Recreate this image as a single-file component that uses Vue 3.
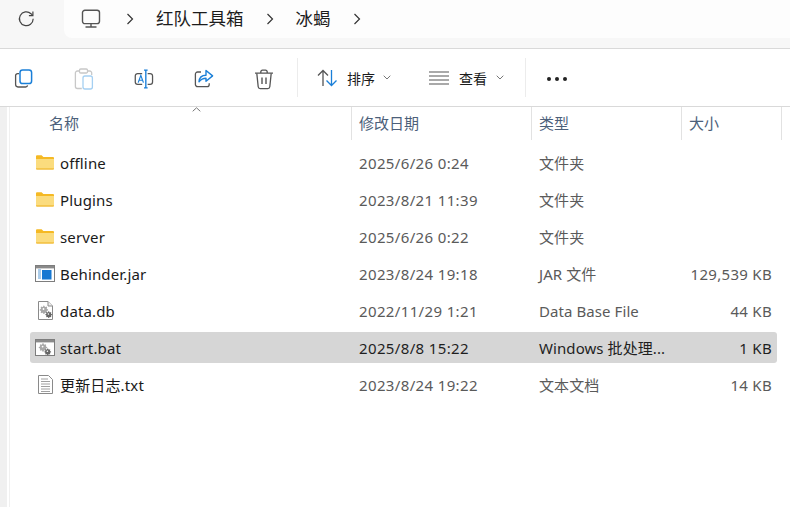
<script setup>
const cols = [
  { key: 'name', label: '名称', cls: 'c-name' },
  { key: 'date', label: '修改日期', cls: 'c-date' },
  { key: 'type', label: '类型', cls: 'c-type' },
  { key: 'size', label: '大小', cls: 'c-size' },
]
const files = [
  { name: 'offline', date: '2025/6/26 0:24', type: '文件夹', size: '', icon: 'folder' },
  { name: 'Plugins', date: '2023/8/21 11:39', type: '文件夹', size: '', icon: 'folder' },
  { name: 'server', date: '2025/6/26 0:22', type: '文件夹', size: '', icon: 'folder' },
  { name: 'Behinder.jar', date: '2023/8/24 19:18', type: 'JAR 文件', size: '129,539 KB', icon: 'jar' },
  { name: 'data.db', date: '2022/11/29 1:21', type: 'Data Base File', size: '44 KB', icon: 'db' },
  { name: 'start.bat', date: '2025/8/8 15:22', type: 'Windows 批处理...', size: '1 KB', icon: 'bat', selected: true },
  { name: '更新日志.txt', date: '2023/8/24 19:22', type: '文本文档', size: '14 KB', icon: 'txt' },
]
const gear = 'M0-3.4l.9.1.3 1 .9.4.9-.5.7.7-.5.9.4.9 1 .3v1l-1 .3-.4.9.5.9-.7.7-.9-.5-.9.4-.3 1h-1l-.3-1-.9-.4-.9.5-.7-.7.5-.9-.4-.9-1-.3v-1l1-.3.4-.9-.5-.9.7-.7.9.5.9-.4.3-1z'
</script>

<template>
  <div class="window">
    <header class="navbar">
      <svg class="refresh" width="20" height="20" viewBox="0 0 20 20" fill="none">
        <path d="M16.2 9.8a6.9 6.9 0 1 1-2.2-5.1l1.6 1.6" stroke="#444" stroke-width="1.2" />
        <path d="M15.9 2.6v4h-4" stroke="#444" stroke-width="1.2" />
      </svg>
      <nav class="crumbs">
        <svg class="pc" width="20" height="20" viewBox="0 0 20 20" fill="none">
          <rect x="1.5" y="1.2" width="17" height="13.4" rx="2.4" stroke="#555" stroke-width="1.4" />
          <path d="M10 14.6v3M4.5 18h11" stroke="#555" stroke-width="1.4" />
        </svg>
        <svg class="chev c1" width="8" height="12" viewBox="0 0 8 12" fill="none"><path d="M1.5 1l5 5-5 5" stroke="#333" stroke-width="1.2" /></svg>
        <span class="crumb">红队工具箱</span>
        <svg class="chev c2" width="8" height="12" viewBox="0 0 8 12" fill="none"><path d="M1.5 1l5 5-5 5" stroke="#333" stroke-width="1.2" /></svg>
        <span class="crumb">冰蝎</span>
        <svg class="chev c3" width="8" height="12" viewBox="0 0 8 12" fill="none"><path d="M1.5 1l5 5-5 5" stroke="#333" stroke-width="1.2" /></svg>
      </nav>
    </header>

    <div class="toolbar">
      <div class="tools">
        <svg width="20" height="20" viewBox="0 0 20 20" fill="none">
          <path d="M5 4.6H3.6A2 2 0 0 0 1.6 6.6v9a2.4 2.4 0 0 0 2.4 2.4h7.6a2 2 0 0 0 2-1.6" stroke="#555" stroke-width="1.3" />
          <rect x="6" y="1" width="11.6" height="13.6" rx="2.6" stroke="#1a7fd8" stroke-width="1.5" />
        </svg>
        <svg width="20" height="22" viewBox="0 0 20 22" fill="none">
          <path d="M5.5 3H3.4A2 2 0 0 0 1.4 5v13.5a2 2 0 0 0 2 2h4.4M13.5 3h2.2a2 2 0 0 1 2 2v2" stroke="#c8c8c8" stroke-width="1.3" />
          <rect x="5.5" y="1" width="8" height="4" rx="1.2" stroke="#c8c8c8" stroke-width="1.3" />
          <rect x="9" y="8" width="9.4" height="13" rx="2" stroke="#a5d0f2" stroke-width="1.3" />
        </svg>
        <svg width="20" height="20" viewBox="0 0 22 22" fill="none">
          <path d="M9 5H4A2.6 2.6 0 0 0 1.4 7.6v6.8A2.6 2.6 0 0 0 4 17h5M15 5h2.8a2.6 2.6 0 0 1 2.6 2.6v6.8a2.6 2.6 0 0 1-2.6 2.6H15" stroke="#555" stroke-width="1.4" />
          <path d="M4.6 15l2.9-8 2.9 8M5.7 12.4h3.6" stroke="#1a7fd8" stroke-width="1.3" />
          <path d="M13 1.5v19M11 1.2h4M11 20.8h4" stroke="#1a7fd8" stroke-width="1.5" />
        </svg>
        <svg width="20" height="20" viewBox="0 0 20 20" fill="none">
          <path d="M7 3H3.6a2.2 2.2 0 0 0-2.2 2.2v10.2a2.2 2.2 0 0 0 2.2 2.2h9.4a2.2 2.2 0 0 0 2.2-2.2v-1.2" stroke="#555" stroke-width="1.3" />
          <path d="M12 1.5l6.6 5.4-6.6 5.4V9.2c-3 0-5 1-7 3.6.3-4 2.8-6.6 7-6.6z" stroke="#1a7fd8" stroke-width="1.4" stroke-linejoin="round" />
        </svg>
        <svg width="20" height="21" viewBox="0 0 20 21" fill="none">
          <path d="M1 4.2h18M6.8 4V2.8A1.6 1.6 0 0 1 8.4 1.2h3.2a1.6 1.6 0 0 1 1.6 1.6V4" stroke="#555" stroke-width="1.3" />
          <path d="M2.8 4.4l1.4 13.4a2 2 0 0 0 2 1.8h7.6a2 2 0 0 0 2-1.8l1.4-13.4" stroke="#555" stroke-width="1.3" />
          <path d="M8 8.5v6.5M12 8.5v6.5" stroke="#555" stroke-width="1.4" />
        </svg>
      </div>
      <span class="sep s1"></span>
      <div class="menu sort">
        <svg width="21" height="18" viewBox="0 0 21 18" fill="none">
          <path d="M6 17V1.5M1 6.5l5-5 5 5" stroke="#555" stroke-width="1.3" />
          <path d="M14.5 1v15.5M9.5 11.5l5 5 5-5" stroke="#1a7fd8" stroke-width="1.3" />
        </svg>
        <span>排序</span>
        <svg class="drop" width="8" height="5" viewBox="0 0 8 5" fill="none"><path d="M.7.7L4 4l3.3-3.3" stroke="#777" stroke-width="1" /></svg>
      </div>
      <div class="menu view">
        <svg width="20" height="14" viewBox="0 0 20 14" fill="none">
          <path d="M0 1h20M0 5h20M0 9h20M0 13h20" stroke="#555" stroke-width="1.1" />
        </svg>
        <span>查看</span>
        <svg class="drop" width="8" height="5" viewBox="0 0 8 5" fill="none"><path d="M.7.7L4 4l3.3-3.3" stroke="#777" stroke-width="1" /></svg>
      </div>
      <span class="sep s2"></span>
      <div class="more"><i></i><i></i><i></i></div>
    </div>

    <main class="pane">
      <div class="inner">
        <div class="head">
          <div v-for="c in cols" :key="c.key" class="hcell" :class="c.cls">{{ c.label }}</div>
          <svg class="sort-caret" width="9" height="5" viewBox="0 0 9 5" fill="none"><path d="M.7 4.3L4.5.8l3.8 3.5" stroke="#777" stroke-width="1" /></svg>
        </div>
        <div class="rows">
          <div v-for="f in files" :key="f.name" class="row" :class="{ selected: f.selected }">
            <div class="c-name cell name">
              <span class="icon">
                <svg v-if="f.icon === 'folder'" width="18" height="15" viewBox="0 0 18 15">
                  <path d="M0 1.2A1 1 0 0 1 1 .2h4.6L7.4 2H17a1 1 0 0 1 1 1v3H0z" fill="#f5b924" />
                  <path d="M0 4h18v9.5a1 1 0 0 1-1 1H1a1 1 0 0 1-1-1z" fill="#fbdc7e" />
                  <path d="M0 13.4h18v.4a.8.8 0 0 1-.8.7H.8a.8.8 0 0 1-.8-.7z" fill="#eeaf1c" />
                </svg>
                <svg v-else-if="f.icon === 'jar'" width="20" height="17" viewBox="0 0 20 17">
                  <rect x=".5" y=".5" width="19" height="16" fill="#fff" stroke="#7d7d7d" />
                  <rect x="1" y="1" width="18" height="2.4" fill="#8a8a8a" />
                  <path d="M3 5h3M3 7h3M3 9h3M3 11h3M3 13h3" stroke="#5b9bd5" />
                  <rect x="7" y="5" width="9.5" height="9.5" fill="#1778d2" />
                </svg>
                <svg v-else-if="f.icon === 'db'" width="15" height="19" viewBox="0 0 15 19">
                  <path d="M.5.5h9.5l4.5 4.5v13.5H.5z" fill="#fff" stroke="#8a8a8a" />
                  <path d="M10 .5V5h4.5" fill="#eee" stroke="#8a8a8a" />
                  <path :d="gear" transform="translate(5.5 8)" fill="#a8a8a8" />
                  <circle cx="5.5" cy="8" r=".9" fill="#fff" />
                  <path :d="gear" transform="translate(10.4 13) scale(.8)" fill="#666" />
                  <circle cx="10.4" cy="13" r=".8" fill="#fff" />
                </svg>
                <svg v-else-if="f.icon === 'bat'" width="20" height="17" viewBox="0 0 20 17">
                  <rect x=".5" y=".5" width="19" height="16" fill="#fff" stroke="#7d7d7d" />
                  <rect x="1" y="1" width="18" height="2.4" fill="#8a8a8a" />
                  <path :d="gear" transform="translate(7.6 7.6)" fill="#a8a8a8" />
                  <circle cx="7.6" cy="7.6" r=".9" fill="#fff" />
                  <path :d="gear" transform="translate(12.4 12.2) scale(.8)" fill="#666" />
                  <circle cx="12.4" cy="12.2" r=".8" fill="#fff" />
                </svg>
                <svg v-else width="15" height="19" viewBox="0 0 15 19">
                  <path d="M.5.5h10l4 4v14H.5z" fill="#fff" stroke="#8a8a8a" />
                  <path d="M3 4h7M3 6.5h9M3 9h9M3 11.5h9M3 14h9M3 16.5h9" stroke="#a0a0a0" />
                </svg>
              </span>
              <span class="label">{{ f.name }}</span>
            </div>
            <div class="c-date cell">{{ f.date }}</div>
            <div class="c-type cell">{{ f.type }}</div>
            <div class="c-size cell size">{{ f.size }}</div>
          </div>
        </div>
      </div>
    </main>
  </div>
</template>

<style scoped>
.window {
  width: 790px;
  height: 507px;
  overflow: hidden;
  background: #fff;
  font-family: "Noto Sans", "Noto Sans CJK SC", sans-serif;
  display: flex;
  flex-direction: column;
  color: #1a1a1a;
}
.navbar {
  height: 48px;
  flex: none;
  background: #f7f7f7;
  border-bottom: 1px solid #d9d9d9;
  display: flex;
  align-items: flex-start;
}
.refresh { margin: 9px 0 0 17px; flex: none; }
.crumbs {
  flex: 1;
  height: 38px;
  margin-left: 27px;
  background: #fdfdfd;
  border-bottom-left-radius: 8px;
  display: flex;
  align-items: center;
}
.pc { margin-left: 17px; }
.crumb { font-size: 17.5px; line-height: 24px; color: #1c1c1c; margin-top: -3px; }
.c1 { margin: 0 22px 0 25px; }
.c2 { margin: 0 22px 0 22px; }
.c3 { margin-left: 22px; }

.toolbar {
  height: 57px;
  flex: none;
  border-bottom: 1px solid #d9d9d9;
  display: flex;
  align-items: center;
}
.tools {
  display: flex;
  align-items: center;
  gap: 40px;
  margin-left: 14px;
  width: 283px;
  padding-top: 3px;
}
.sep { width: 1px; height: 39px; background: #ececec; flex: none; }
.menu { display: flex; align-items: center; font-size: 14px; color: #1c1c1c; }
.menu .drop { margin-left: 7px; }
.sort { margin-left: 19px; gap: 9px; width: 112px; }
.sort .drop { margin-left: -1px; }
.view { gap: 10px; width: 96px; }
.view .drop { margin-left: -1px; }
.more { display: flex; gap: 4px; margin: 2px 0 0 21px; }
.more i { width: 4px; height: 4px; border-radius: 50%; background: #222; }

.pane {
  flex: 1;
  min-height: 0;
  border-left: 7px solid #f0f0f0;
  padding-left: 2px;
}
.inner {
  height: 100%;
  border-left: 1px solid #f0f0f0;
}
.head {
  height: 33px;
  display: flex;
  position: relative;
}
.hcell {
  font-size: 15px;
  color: #4c607a;
  line-height: 33px;
  border-right: 1px solid #e2e2e2;
  box-sizing: border-box;
  padding-left: 7px;
}
.head .c-name { padding-left: 39px; }
.sort-caret { position: absolute; left: 182px; top: 0; }
.c-name { width: 342px; flex: none; box-sizing: border-box; }
.c-date { width: 180px; flex: none; box-sizing: border-box; }
.c-type { width: 150px; flex: none; box-sizing: border-box; }
.c-size { width: 100px; flex: none; box-sizing: border-box; }
.rows { padding: 7px 13px 0 20px; }
.row {
  height: 31px;
  margin-bottom: 6px;
  display: flex;
  align-items: center;
  border-radius: 3px;
  font-size: 15px;
  color: #5a5a5a;
}
.row.selected { background: #d6d6d6; color: #1f1f1f; }
.row .c-name { width: 322px; }
.cell { padding-left: 7px; white-space: nowrap; }
.row .name { display: flex; align-items: center; padding-left: 0; color: #1a1a1a; }
.icon { width: 30px; display: flex; justify-content: center; flex: none; }
.label { font-size: 15px; letter-spacing: .15px; }
.row .c-date { letter-spacing: .36px; }
.row .c-type { letter-spacing: .08px; }
.row .c-size { width: 95px; letter-spacing: .3px; }
.size { text-align: right; padding: 0 5px 0 0; }
</style>
